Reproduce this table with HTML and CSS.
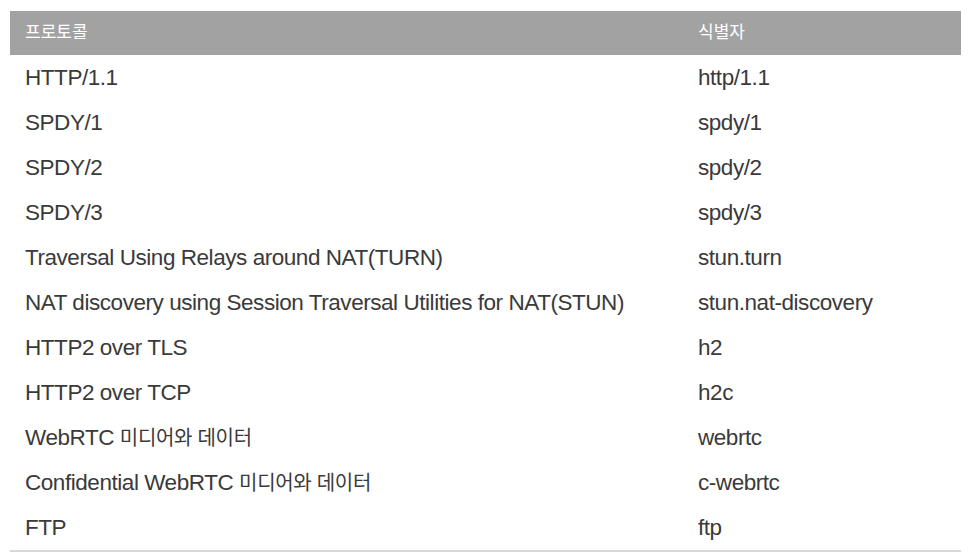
FILE: index.html
```html
<!DOCTYPE html>
<html lang="ko">
<head>
    <meta charset="UTF-8">
    <title>프로토콜 식별자</title>
    <link rel="stylesheet" href="styles.css">
</head>
<body>

    <!-- Protocol identifier table -->
    <table class="proto-table">
        <thead>
            <tr>
                <th class="col-name">프로토콜</th>
                <th>식별자</th>
            </tr>
        </thead>
        <tbody>
            <tr><td>HTTP/1.1</td><td>http/1.1</td></tr>
            <tr><td>SPDY/1</td><td>spdy/1</td></tr>
            <tr><td>SPDY/2</td><td>spdy/2</td></tr>
            <tr><td>SPDY/3</td><td>spdy/3</td></tr>
            <tr><td>Traversal Using Relays around NAT(TURN)</td><td>stun.turn</td></tr>
            <tr><td>NAT discovery using Session Traversal Utilities for NAT(STUN)</td><td>stun.nat-discovery</td></tr>
            <tr><td>HTTP2 over TLS</td><td>h2</td></tr>
            <tr><td>HTTP2 over TCP</td><td>h2c</td></tr>
            <tr><td>WebRTC <span class="ko">미디어와 데이터</span></td><td>webrtc</td></tr>
            <tr><td>Confidential WebRTC <span class="ko">미디어와 데이터</span></td><td>c-webrtc</td></tr>
            <tr><td>FTP</td><td>ftp</td></tr>
        </tbody>
    </table>

</body>
</html>
```

FILE: styles.css
```css
body {
    margin: 0;
    padding: 11px 15px 0 10px;
    background-color: white;
    font-family: "Liberation Sans", "Noto Sans CJK KR", sans-serif;
    color: #3a3a3a;
}

/* Table */
.proto-table {
    width: 951px;
    border-collapse: collapse;
    border-bottom: 2px solid #d8d8d8;
}

.proto-table th {
    background-color: #a2a2a2;
    color: white;
    font-size: 17px;
    font-weight: normal;
    text-align: left;
    line-height: 22px;
    height: 44px;
    padding: 0 15px;
}

.proto-table th.col-name {
    width: 643px;
}

.proto-table td {
    font-size: 22.5px;
    letter-spacing: -0.45px;
    line-height: 24px;
    height: 45px;
    padding: 0 15px;
}

/* Hangul runs a little narrower than the latin text */
.proto-table .ko {
    font-size: 20px;
    letter-spacing: -0.3px;
}
```
